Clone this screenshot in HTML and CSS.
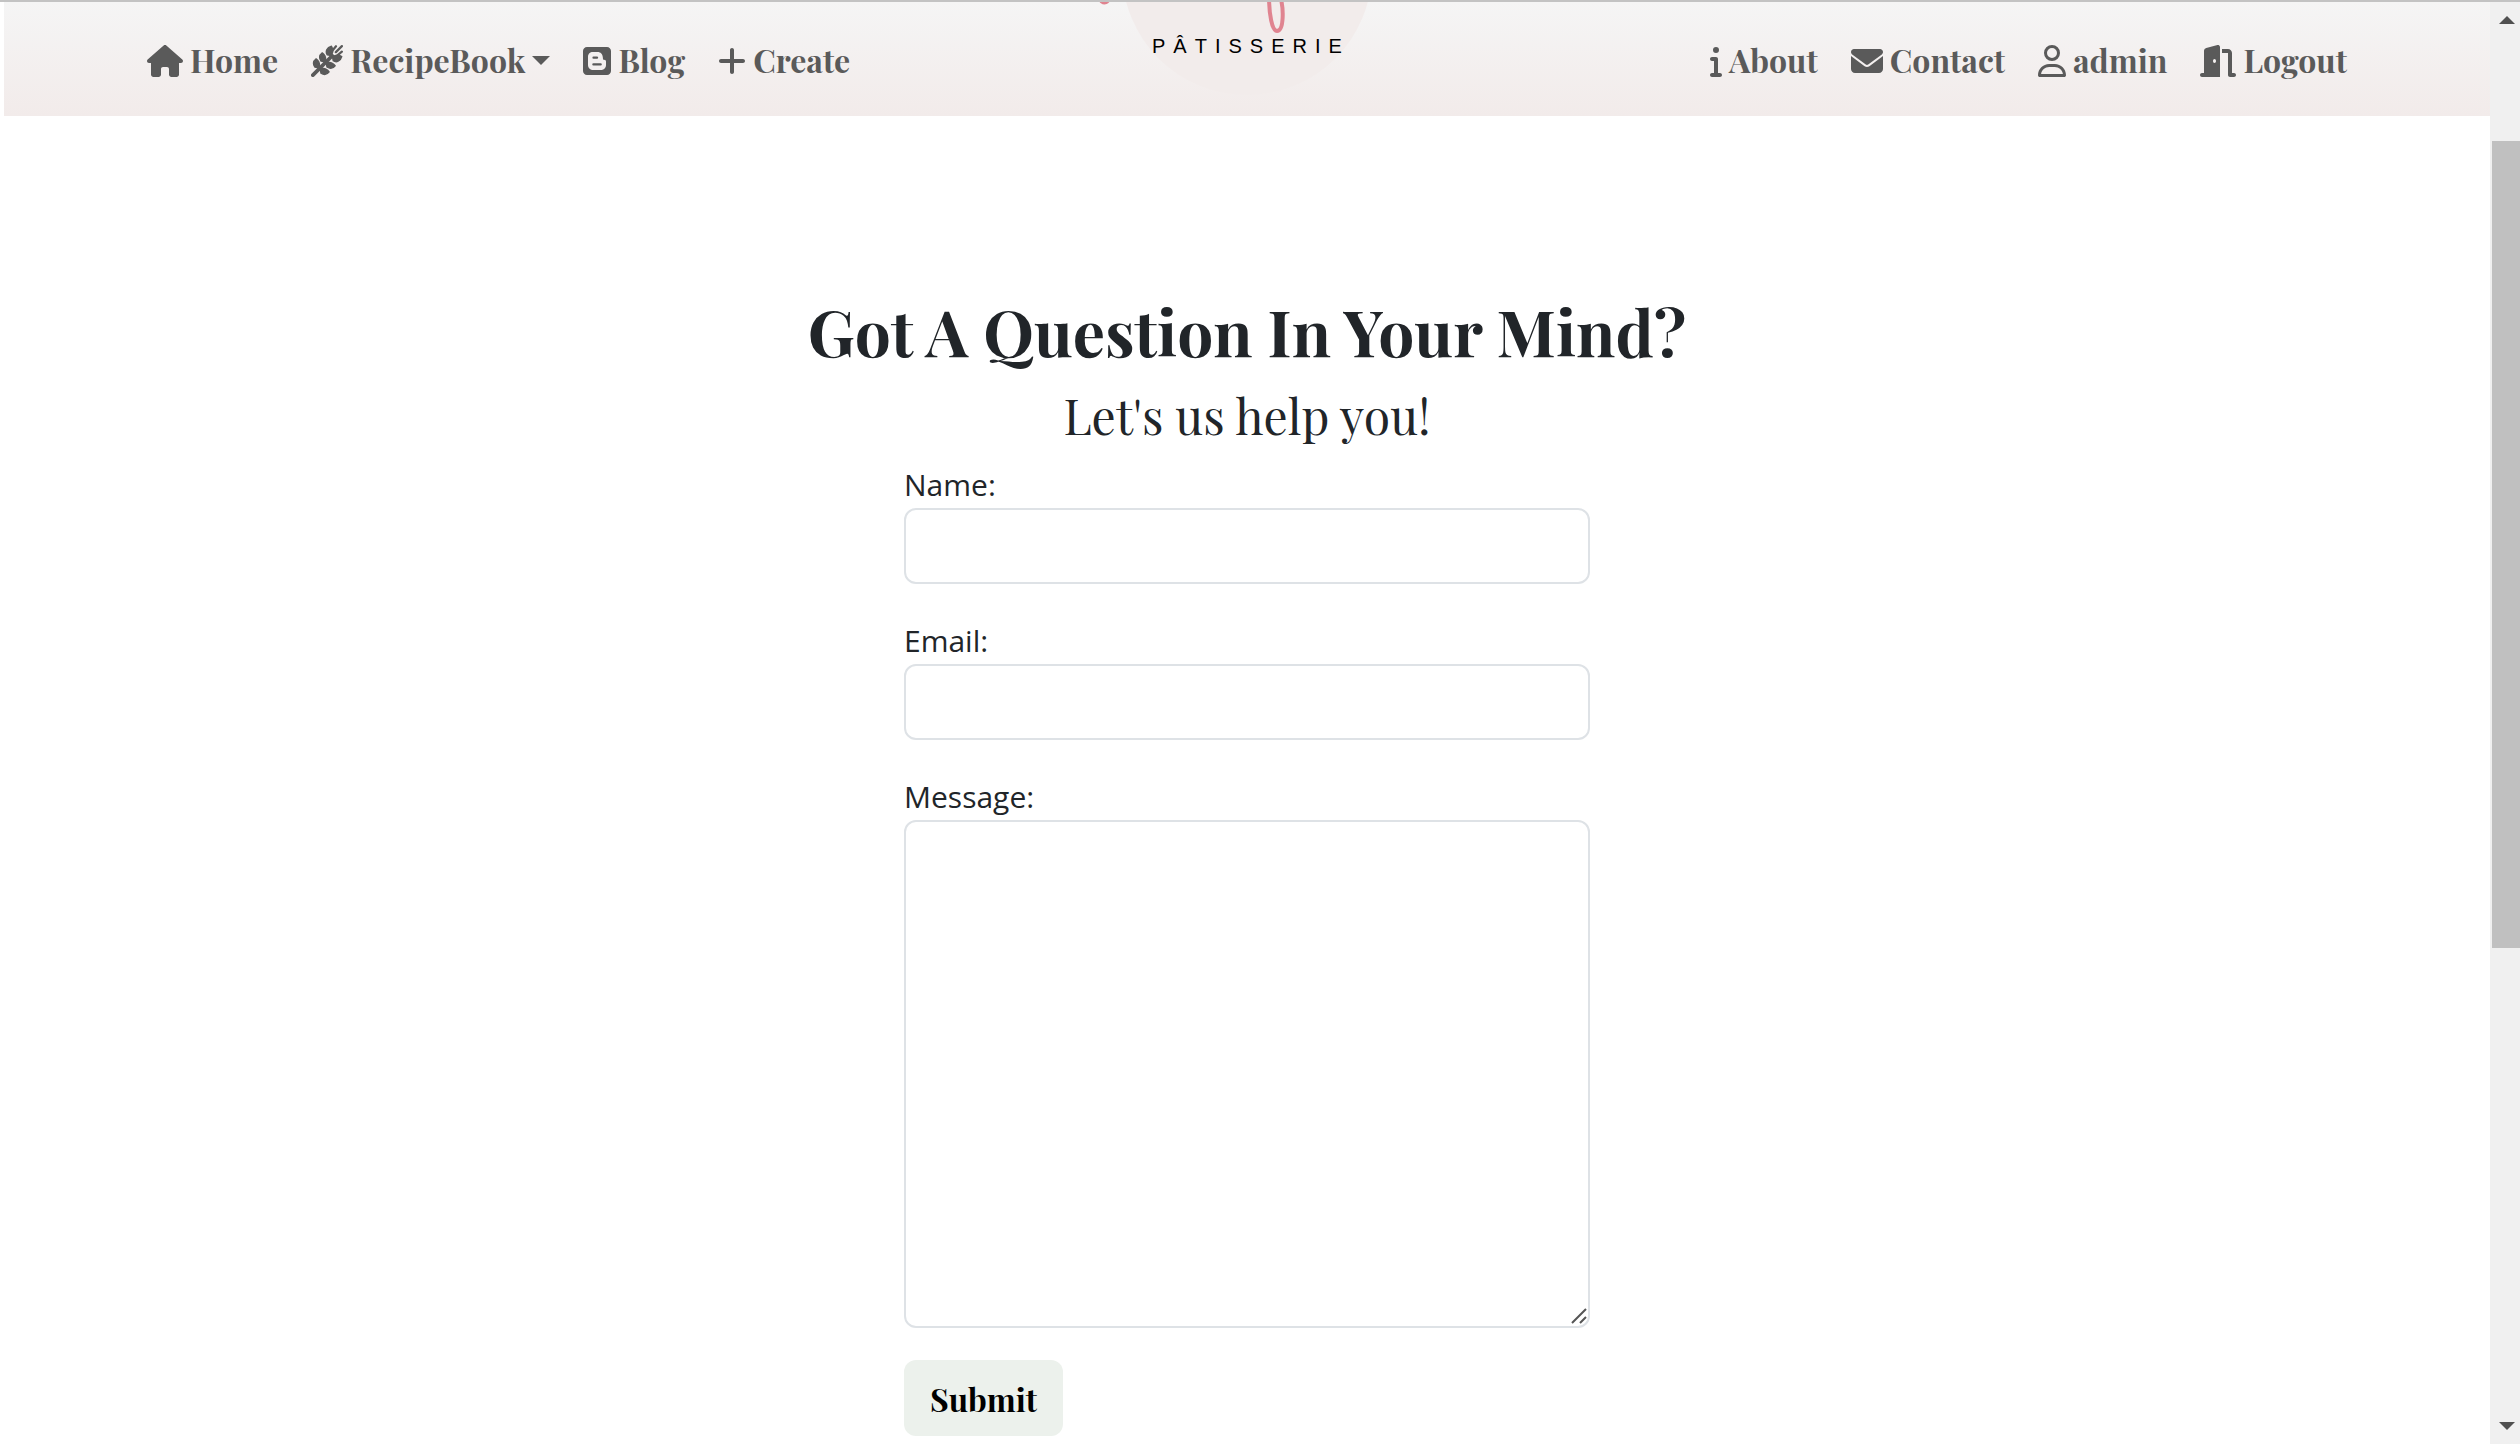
FILE: index.html
```
<!DOCTYPE html>
<html lang="en">
<head>
<meta charset="utf-8">
<meta name="viewport" content="width=device-width, initial-scale=1">
<title>Contact - Pâtisserie</title>
<link rel="stylesheet" href="styles.css">
</head>
<body>
<header class="site-header">
  <nav class="nav nav-start" aria-label="Main">
    <a class="nav-link" href="#home"><svg class="icon icon-wide" viewBox="0 0 576 512" aria-hidden="true"><path d="M575.800 255.500c0 18-15 32.100-32 32.100h-32l.7 160.200c0 2.700-.2 5.400-.5 8.100V472c0 22.100-17.900 40-40 40H392c-22.100 0-40-17.900-40-40V384c0-17.700-14.300-32-32-32H256c-17.700 0-32 14.300-32 32v88c0 22.100-17.900 40-40 40H104c-22.100 0-40-17.900-40-40V287.600H32c-18 0-32-14-32-32.100 0-9 3-17 10-24L266.400 8c7-7 15-8 22-8s15 2 21 7L564.800 231.500c8 7 12 15 11 24z"/></svg>Home</a>
    <a class="nav-link" href="#recipes"><svg class="icon" viewBox="0 0 512 512" aria-hidden="true"><g fill="none" stroke="currentColor" stroke-linecap="round"><path stroke-width="60" d="M30 482 340 172"/><path stroke-width="36" d="M340 92 400 20M398 114 494 18M422 166 494 106"/></g><path stroke="currentColor" stroke-width="22" stroke-linejoin="round" d="M60 352C28 302 40 254 82 222c50 40 66 90 42 142zM160 256c-34-50-22-98 20-130 50 40 66 90 42 142zM260 156c-34-50-10-114 68-136 30 50 32 96-6 148zM160 452c50 32 98 20 130-22-40-50-90-66-142-42zM256 352c50 34 98 22 130-20-40-50-90-66-142-42zM356 252c50 34 114 10 136-68-50-30-96-32-148 6z"/></svg>RecipeBook<span class="caret"></span></a>
    <a class="nav-link" href="#blog"><svg class="icon icon-narrow" viewBox="0 0 448 512" aria-hidden="true"><path fill-rule="evenodd" d="M64 32h320c35 0 64 29 64 64v320c0 35-29 64-64 64H64c-35 0-64-29-64-64V96c0-35 29-64 64-64zM158 112c-46 0-78 32-78 78v130c0 46 34 80 80 80h128c48 0 80-34 80-80v-56c0-20-10-26-32-28-16-2-16-10-18-34-4-56-36-90-84-90zM168 182h54c28 0 28 36 0 36h-54c-24 0-24-36 0-36zM166 292h116c26 0 26 36 0 36H166c-24 0-24-36 0-36z"/></svg>Blog</a>
    <a class="nav-link" href="#create"><svg class="icon icon-narrow" viewBox="0 0 448 512" aria-hidden="true"><path d="M256 80c0-17.700-14.300-32-32-32s-32 14.300-32 32V224H48c-17.700 0-32 14.300-32 32s14.300 32 32 32H192V432c0 17.700 14.300 32 32 32s32-14.300 32-32V288H400c17.700 0 32-14.300 32-32s-14.300-32-32-32H256V80z"/></svg>Create</a>
  </nav>
  <a class="brand" href="#home" aria-label="Pâtisserie home">
    <svg class="brand-logo" viewBox="0 2 300 114">
      <circle cx="150" cy="-30" r="125" fill="#f2eceb"/>
      <path d="M5 1Q9 4 12-2" fill="none" stroke="#e08490" stroke-width="5" stroke-linecap="round"/>
      <path d="M172-4C172 14 175 31 180 31 187 31 187 8 183-4" fill="none" stroke="#e08490" stroke-width="4"/>
      <text class="brand-text" x="55" y="53">PÂTISSERIE</text>
    </svg>
  </a>
  <nav class="nav nav-end" aria-label="Account">
    <a class="nav-link" href="#about"><svg class="icon icon-info" viewBox="0 0 192 512" aria-hidden="true"><path d="M48 80a48 48 0 1 1 96 0A48 48 0 1 1 48 80zM0 224c0-17.700 14.300-32 32-32H96c17.700 0 32 14.300 32 32V448h32c17.700 0 32 14.300 32 32s-14.300 32-32 32H32c-17.700 0-32-14.300-32-32s14.300-32 32-32H64V256H32c-17.700 0-32-14.300-32-32z"/></svg>About</a>
    <a class="nav-link" href="#contact"><svg class="icon" viewBox="0 0 512 512" aria-hidden="true"><path d="M48 64C21.500 64 0 85.500 0 112c0 15.100 7.100 29.300 19.200 38.400L236.800 313.600c11.400 8.500 27 8.500 38.400 0L492.800 150.400c12.100-9.100 19.200-23.300 19.200-38.400c0-26.500-21.500-48-48-48H48zM0 176V384c0 35.300 28.700 64 64 64H448c35.300 0 64-28.700 64-64V176L294.400 339.200c-22.800 17.100-54 17.100-76.800 0L0 176z"/></svg>Contact</a>
    <a class="nav-link" href="#account"><svg class="icon icon-narrow" viewBox="0 0 448 512" aria-hidden="true"><path d="M304 128a80 80 0 1 0-160 0 80 80 0 1 0 160 0zM96 128a128 128 0 1 1 256 0A128 128 0 1 1 96 128zM49.300 464H398.700c-8.900-63.300-63.300-112-129-112H178.300c-65.700 0-120.100 48.700-129 112zM0 482.300C0 383.800 79.800 304 178.300 304h91.400C368.200 304 448 383.800 448 482.300c0 16.400-13.300 29.700-29.700 29.700H29.700C13.300 512 0 498.700 0 482.300z"/></svg>admin</a>
    <a class="nav-link" href="#logout"><svg class="icon icon-wide" viewBox="0 0 576 512" aria-hidden="true"><path d="M320 32c0-9.900-4.500-19.200-12.300-25.200S289.800-1.400 280.200 1l-179.900 45C79 51.300 64 70.500 64 92.500V448H32c-17.700 0-32 14.300-32 32s14.300 32 32 32H320V32zM256 256c0 17.700-10.700 32-24 32s-24-14.300-24-32s10.700-32 24-32s24 14.300 24 32zm96-128h96V480c0 17.700 14.300 32 32 32h64c17.700 0 32-14.300 32-32s-14.300-32-32-32H512V128c0-35.300-28.700-64-64-64H352v64z"/></svg>Logout</a>
  </nav>
</header>
<main class="content">
  <h1 class="title">Got A Question In Your Mind?</h1>
  <p class="subtitle">Let's us help you!</p>
  <form class="contact-form">
    <div class="field">
      <label class="label" for="name">Name:</label>
      <input class="control" id="name" name="name" type="text">
    </div>
    <div class="field">
      <label class="label" for="email">Email:</label>
      <input class="control" id="email" name="email" type="email">
    </div>
    <div class="field">
      <label class="label" for="message">Message:</label>
      <div class="message-box">
        <textarea class="control message" id="message" name="message"></textarea>
        <svg class="grip" viewBox="0 0 16 16" aria-hidden="true"><path d="M1 15 15 1M9 15 15 9"/></svg>
      </div>
    </div>
    <button class="submit" type="submit">Submit</button>
  </form>
</main>
<div class="scrollbar" aria-hidden="true">
  <svg class="scroll-arrow" viewBox="0 0 16 8"><path d="M0 8 8 0 16 8z"/></svg>
  <div class="scroll-track"><div class="scroll-thumb"></div></div>
  <svg class="scroll-arrow" viewBox="0 0 16 8"><path d="M0 0 8 8 16 0z"/></svg>
</div>
</body>
</html>
```
FILE: styles.css
```
* {
  box-sizing: border-box;
}

html {
  overflow: hidden;
}

body {
  margin: 0;
  padding: 0 30px 0 4px;
  border-top: 2px solid #c3c3c3;
  background: #fff;
  color: #212529;
  font-family: "Playfair Display", "Liberation Serif", serif;
}

.site-header {
  display: grid;
  grid-template-columns: 1fr 300px 1fr;
  align-items: center;
  padding: 0 143px;
  background: linear-gradient(#f5f5f5, #f2ebea);
}

.nav {
  display: flex;
  align-items: center;
  gap: 33px;
  padding-top: 2px;
}

.nav-end {
  justify-content: flex-end;
}

.nav-link {
  display: flex;
  align-items: center;
  gap: 7px;
  color: #5a5a5a;
  font-size: 32px;
  font-weight: 700;
  line-height: 48px;
  text-decoration: none;
}

.icon {
  width: 32px;
  height: 32px;
  margin-top: 2px;
  fill: currentColor;
}

.icon-wide {
  width: 36px;
}

.icon-narrow {
  width: 28px;
}

.icon-info {
  width: 12px;
}

.caret {
  border: 9px solid transparent;
  border-top-color: currentColor;
  border-bottom: 0;
}

.brand {
  display: block;
  height: 114px;
}

.brand-logo {
  display: block;
  width: 300px;
  height: 114px;
}

.brand-text {
  font-family: "Liberation Sans", Arial, sans-serif;
  font-size: 20px;
  letter-spacing: 8px;
  fill: #000;
}

.content {
  padding-top: 176px;
  text-align: center;
}

.title {
  margin: 0 0 16px;
  font-size: 64px;
  font-weight: 700;
  line-height: 78px;
}

.subtitle {
  margin: 0 0 16px;
  font-size: 48px;
  line-height: 58px;
}

.contact-form {
  max-width: 686px;
  margin: 0 auto;
  text-align: left;
}

.field {
  margin-bottom: 32px;
}

.label {
  display: block;
  padding-top: 2px;
  font-family: "Segoe UI", "Open Sans", sans-serif;
  font-size: 30px;
  line-height: 46px;
}

.control {
  display: block;
  width: 100%;
  height: 76px;
  padding: 12px 24px;
  border: 2px solid #dee2e6;
  border-radius: 12px;
  background: #fff;
  color: inherit;
  font-family: "Segoe UI", "Open Sans", sans-serif;
  font-size: 30px;
}

.message-box {
  position: relative;
}

.message {
  height: 508px;
  resize: none;
}

.grip {
  position: absolute;
  right: 3px;
  bottom: 4px;
  width: 16px;
  height: 16px;
  fill: none;
  stroke: #555;
  stroke-width: 2;
}

.submit {
  height: 76px;
  padding: 0 26px;
  border: 0;
  border-radius: 12px;
  background: #ecf1ec;
  color: #000;
  font-family: inherit;
  font-size: 32px;
  font-weight: 700;
}

.scrollbar {
  position: fixed;
  top: 2px;
  right: 0;
  bottom: 0;
  display: flex;
  flex-direction: column;
  width: 30px;
  padding: 14px 0;
  background: #f0f0f0;
}

.scroll-arrow {
  width: 16px;
  height: 8px;
  margin-left: 9px;
  fill: #505050;
}

.scroll-track {
  flex: 1;
  padding: 117px 0 0 2px;
}

.scroll-thumb {
  height: 63%;
  background: #c0c0c0;
}
```
